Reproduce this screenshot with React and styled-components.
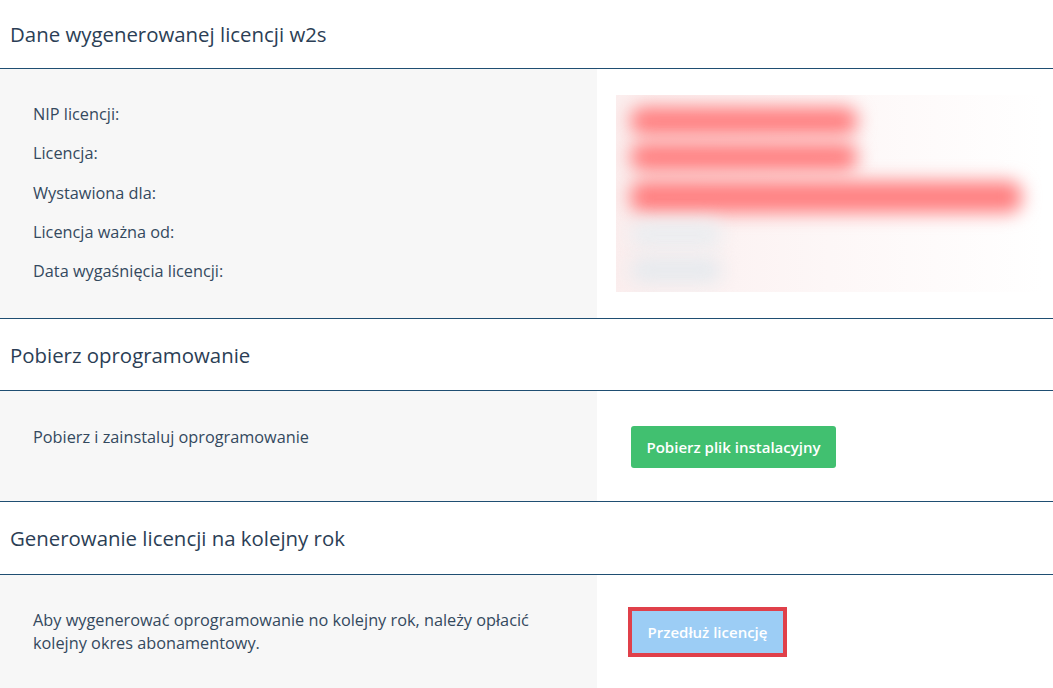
import React from 'react'
import styled, { createGlobalStyle } from 'styled-components'

const GlobalStyle = createGlobalStyle`
    body {
        margin: 0;
        background-color: #ffffff;
        font-family: 'Open Sans', 'Noto Sans', sans-serif;
        color: #34495e;
    }
`

const Page = styled.div`
    width: 1053px;
    display: flex;
    flex-direction: column;
`

const SectionHeader = styled.div`
    height: ${props => props.height}px;
    display: flex;
    align-items: center;
    padding: 0 10px;
    border-bottom: 1px solid #1f4e72;
    background-color: #ffffff;
`

const Title = styled.h2`
    margin: 0;
    font-size: 20.4px;
    font-weight: 400;
    color: #2b3e55;
`

const SectionBody = styled.div`
    display: grid;
    grid-template-columns: 597px 1fr;
    min-height: ${props => props.height}px;
    border-bottom: ${props => props.last ? 'none' : '1px solid #1f4e72'};
`

const LeftCol = styled.div`
    background-color: #f7f7f7;
    padding: ${props => props.pad}px 30px 0 33px;
`

const RightCol = styled.div`
    background-color: #ffffff;
    padding: ${props => props.pad}px 0 0 ${props => props.left}px;
`

const LabelList = styled.div`
    display: flex;
    flex-direction: column;
`

const Label = styled.div`
    height: 39.3px;
    line-height: 39.3px;
    font-size: 16.3px;
    color: #34495e;
`

const Text = styled.p`
    margin: 0;
    font-size: 16.3px;
    line-height: 23px;
    color: #34495e;
`

const Redacted = styled.div`
    width: 427px;
    height: 197px;
    display: flex;
    flex-direction: column;
    gap: 8px;
    padding: 12px 0 0 14px;
    box-sizing: border-box;
    overflow: hidden;
    background: linear-gradient(90deg, #fbeeee 0%, #fdf7f7 50%, #ffffff 100%);
`

const Bar = styled.div`
    width: ${props => props.w}px;
    height: ${props => props.h}px;
    margin-top: ${props => props.top || 0}px;
    background-color: ${props => props.color};
    border-radius: 14px;
    filter: blur(9px);
`

const Button = styled.button`
    font-family: 'Open Sans', 'Noto Sans', sans-serif;
    font-size: 15px;
    font-weight: 600;
    color: #ffffff;
    border: none;
    border-radius: 3px;
    cursor: pointer;
    outline: 0;
`

const GreenButton = styled(Button)`
    background-color: #41c070;
    width: 205px;
    height: 42px;
`

const BlueButton = styled(Button)`
    background-color: #9ccdf5;
    width: 159px;
    height: 50px;
    border: 4px solid #e0404a;
    border-radius: 0;
`

const App = () => {
    return (
        <Page>
            <GlobalStyle />
            <SectionHeader height={68}>
                <Title>Dane wygenerowanej licencji w2s</Title>
            </SectionHeader>
            <SectionBody height={249}>
                <LeftCol pad={26}>
                    <LabelList>
                        <Label>NIP licencji:</Label>
                        <Label>Licencja:</Label>
                        <Label>Wystawiona dla:</Label>
                        <Label>Licencja ważna od:</Label>
                        <Label>Data wygaśnięcia licencji:</Label>
                    </LabelList>
                </LeftCol>
                <RightCol pad={26} left={19}>
                    <Redacted>
                        <Bar w={228} h={28} color="#ff7f80" />
                        <Bar w={228} h={28} color="#ff7f80" />
                        <Bar w={392} h={32} color="#ff7f80" top={2} />
                        <Bar w={92} h={26} color="#eaedf0" />
                        <Bar w={92} h={26} color="#e6eaee" top={2} />
                    </Redacted>
                </RightCol>
            </SectionBody>

            <SectionHeader height={71}>
                <Title>Pobierz oprogramowanie</Title>
            </SectionHeader>
            <SectionBody height={110}>
                <LeftCol pad={35}>
                    <Text>Pobierz i zainstaluj oprogramowanie</Text>
                </LeftCol>
                <RightCol pad={35} left={34}>
                    <GreenButton>Pobierz plik instalacyjny</GreenButton>
                </RightCol>
            </SectionBody>

            <SectionHeader height={72}>
                <Title>Generowanie licencji na kolejny rok</Title>
            </SectionHeader>
            <SectionBody height={113} last>
                <LeftCol pad={34}>
                    <Text>Aby wygenerować oprogramowanie no kolejny rok, należy opłacić kolejny okres abonamentowy.</Text>
                </LeftCol>
                <RightCol pad={32} left={31}>
                    <BlueButton>Przedłuż licencję</BlueButton>
                </RightCol>
            </SectionBody>
        </Page>
    )
}

export default App
